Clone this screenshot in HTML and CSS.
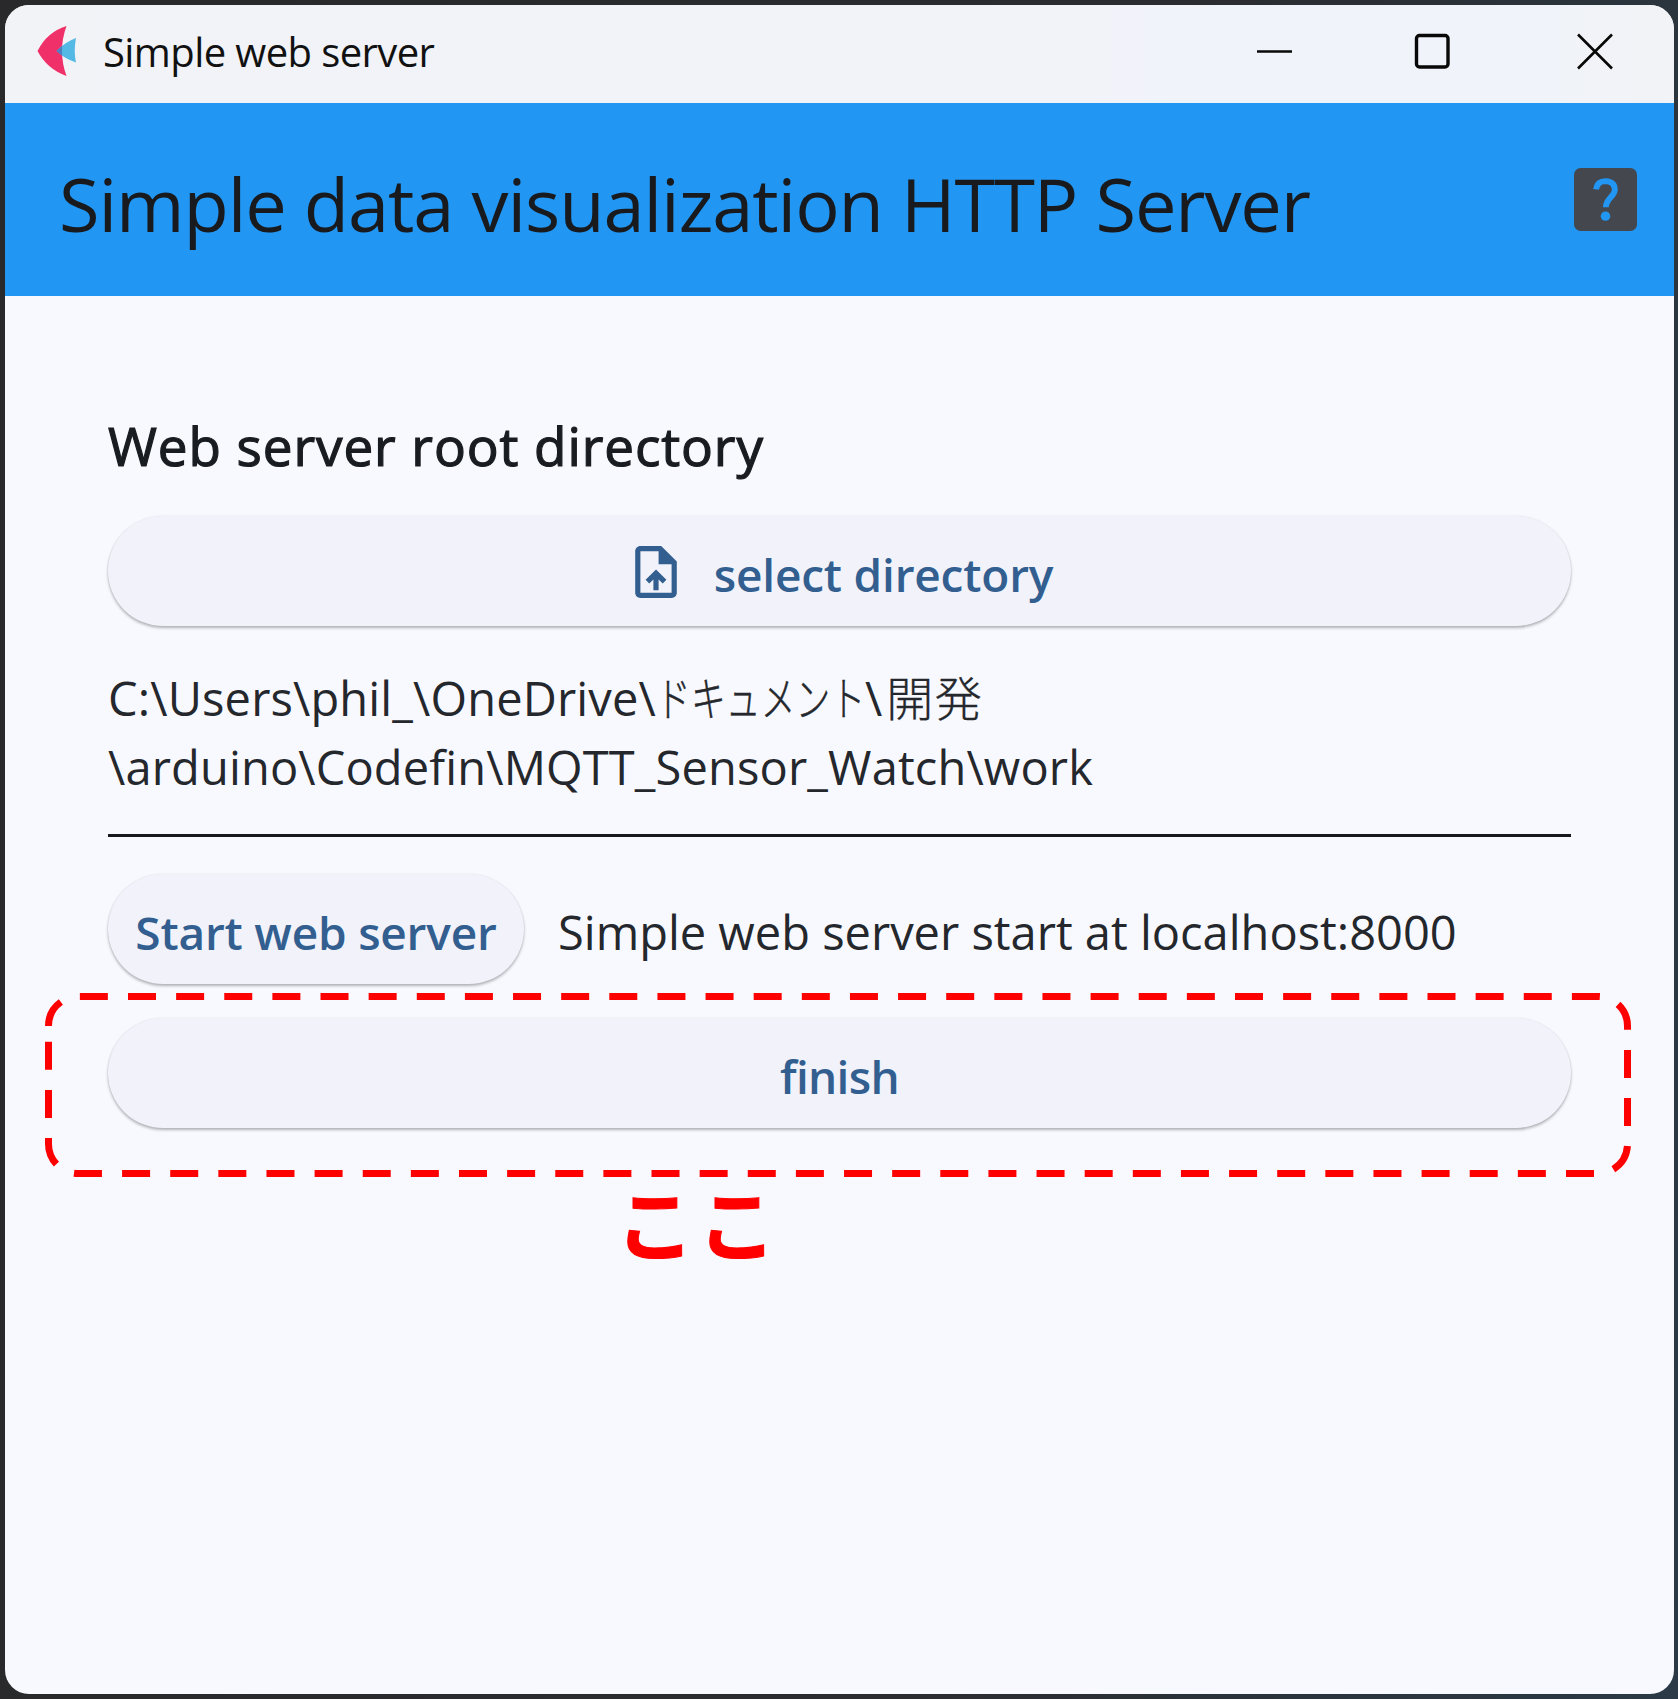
FILE: index.html
```html
<!DOCTYPE html>
<html lang="ja">
<head>
<meta charset="utf-8">
<title>Simple web server</title>
<link rel="stylesheet" href="styles.css">
</head>
<body>
<div class="window">
  <header class="titlebar">
    <svg class="logo" viewBox="0 0 40 52"><path d="M29.500 1Q10 7 .5 26Q10 44 29.500 51Q20.500 26 29.500 1Z" fill="#f03068"/><path d="M19.500 26Q28 17 39 13Q36.500 26 39 37.500Q28 34 19.500 26Z" fill="#55b9e6"/><path d="M19.500 26Q22 23.300 25.300 20.900Q24.700 26 25.300 30.800Q22 28.500 19.500 26Z" fill="#4f7fc0"/></svg>
    <span class="window-name">Simple web server</span>
    <svg class="controls" viewBox="0 0 360 40" fill="none" stroke="#080808"><path d="M1 20.500H36" stroke-width="2.600"/><rect x="160.500" y="4.500" width="31.500" height="31.500" rx="3" stroke-width="3.400"/><path d="M322 3.500L356 37.500M356 3.500L322 37.500" stroke-width="2.600"/></svg>
  </header>
  <div class="appbar">
    <h1>Simple data visualization HTTP Server</h1>
    <svg class="help" viewBox="3 3 18 18"><rect x="3" y="3" width="18" height="18" rx="1.900" fill="#44474e"/><path d="M9.300 9.100Q9.600 6.750 12 6.750Q14.650 6.900 14.650 9.200C14.650 11.200 12.100 11.600 12.100 14.200" fill="none" stroke="#2196f3" stroke-width="1.700"/><circle cx="12" cy="16.750" r="1.350" fill="#2196f3"/></svg>
  </div>
  <main>
    <h2>Web server root directory</h2>
    <button class="pill select">
      <svg class="file" viewBox="4 2 16 20"><path fill="#325f90" fill-rule="evenodd" d="M14 2H6c-1.100 0-2 .9-2 2v16c0 1.100.89 2 1.990 2H18c1.100 0 2-.9 2-2V8l-6-6zm4 18H6V4h7v5h5v11z"/><path fill="#325f90" d="M8 15.010l1.410 1.410L11 14.840V19h2v-4.160l1.590 1.590L16 15.010 12.010 11z"/></svg>
      <span>select directory</span>
    </button>
    <p class="path">C:\Users\phil_\OneDrive\<span class="kana"><span>ドキュメント</span></span>\<span class="kanji">開発</span><br>\arduino\Codefin\MQTT_Sensor_Watch\work</p>
    <div class="divider"></div>
    <div class="server">
      <button class="pill start"><span>Start web server</span></button>
      <span class="status">Simple web server start at localhost:8000</span>
    </div>
    <button class="pill finish"><span>finish</span></button>
  </main>
  <svg class="marker" viewBox="0 0 1586 184"><path d="M3.500 33A29.500 29.500 0 0 1 33 3.500H1553A29.500 29.500 0 0 1 1582.500 33V151A29.500 29.500 0 0 1 1553 180.500H33A29.500 29.500 0 0 1 3.500 151Z" fill="none" stroke="#f00" stroke-width="7" stroke-dasharray="28 20.130"/></svg>
  <div class="note">ここ</div>
</div>
</body>
</html>
```
FILE: styles.css
```css
* { box-sizing: border-box; }
body { margin: 0; width: 1678px; height: 1699px; overflow: hidden; padding: 5px 4px 5px 5px; background: linear-gradient(100deg, #29292b 0%, #2b2c30 60%, #2b3a46 100%); font-family: "Open Sans", "Noto Sans CJK JP", sans-serif; color: #24272c; }
.window { position: relative; width: 1669px; height: 1689px; border-radius: 24px; background: #f8f9ff; overflow: hidden; }
.titlebar { display: flex; align-items: center; height: 98px; padding: 0 58px 6px 32px; background: linear-gradient(90deg, #f2f3f7 0%, #f1f3f9 60%, #f0f3fa 90%, #f1f3f6 100%); }
.logo { width: 40px; height: 52px; }
.window-name { margin-left: 26px; font-size: 40px; letter-spacing: -.6px; color: #111; white-space: nowrap; }
.controls { width: 360px; height: 40px; margin-left: auto; }
.appbar { display: flex; align-items: center; justify-content: space-between; height: 193px; padding: 0 37px 0 54px; background: #2196f3; }
h1 { margin: 0; padding-top: 7px; font-size: 74px; font-weight: 400; letter-spacing: -1.090px; white-space: nowrap; color: #181a1e; }
.help { width: 63px; height: 63px; }
main { display: flex; flex-direction: column; align-items: stretch; padding: 105px 103px 0; }
h2 { margin: 0 0 15px; height: 100px; line-height: 90px; font-size: 53px; font-weight: 400; letter-spacing: .92px; -webkit-text-stroke: 1.200px #191c20; color: #191c20; white-space: nowrap; }
.pill { display: flex; align-items: center; justify-content: center; height: 110px; padding: 0; border: 0; border-radius: 55px; background: #f1f2fa; box-shadow: 0 2px 3px rgba(0,0,0,.28), 0 0 2px rgba(0,0,0,.08); color: #325f90; font: 600 46px "Open Sans", sans-serif; letter-spacing: -.2px; white-space: nowrap; }
.pill span { padding-top: 5px; }
.select { padding-left: 9px; }
.file { width: 42px; height: 52px; margin: 1px 37px 0 0; }
.path { margin: 38px 0 0; font-size: 47px; line-height: 69px; letter-spacing: .15px; white-space: nowrap; }
.kana { display: inline-block; width: 209px; }
.kana span { display: inline-block; width: 282px; margin-right: -73px; font-weight: 300; -webkit-text-stroke: .500px; transform: scaleX(.74); transform-origin: left; }
.kanji { margin-left: 4px; font-weight: 300; -webkit-text-stroke: .300px; letter-spacing: 1.500px; }
.divider { height: 3px; margin-top: 32px; background: #15181c; }
.server { display: flex; align-items: center; gap: 34px; margin-top: 37px; }
.start { width: 416px; }
.status { padding-top: 6px; font-size: 47px; white-space: nowrap; }
.finish { margin-top: 34px; letter-spacing: -.7px; }
.marker { position: absolute; left: 40px; top: 988px; width: 1586px; height: 184px; }
.note { position: absolute; left: 611px; top: 1156px; font: 700 78px/120px "Noto Sans CJK JP", sans-serif; letter-spacing: 4px; color: #f00; -webkit-text-stroke: 1px #f00; }
```
